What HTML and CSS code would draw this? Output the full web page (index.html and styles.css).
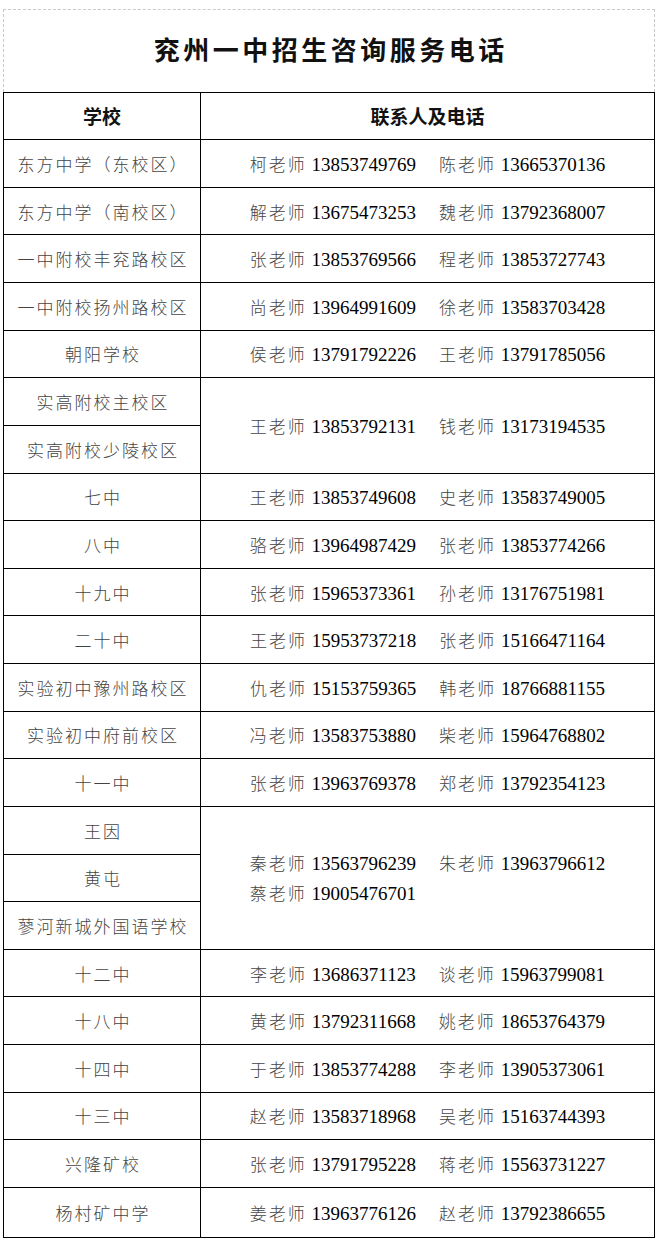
FILE: index.html
```html
<!DOCTYPE html>
<html lang="zh-CN">
<head>
<meta charset="utf-8">
<title>兖州一中招生咨询服务电话</title>
<link rel="stylesheet" href="styles.css">
</head>
<body>
<div class="page">
  <div class="title-box">
    <h1 class="title">兖州一中招生咨询服务电话</h1>
  </div>
  <table class="contacts">
    <colgroup><col class="col-school"><col class="col-contact"></colgroup>
    <thead>
      <tr><th class="h">学校</th><th class="h">联系人及电话</th></tr>
    </thead>
    <tbody>
      <tr><td class="s">东方中学（东校区）</td><td class="c"><span class="n">柯老师</span> <span class="p">13853749769</span><span class="gap"></span><span class="n">陈老师</span> <span class="p">13665370136</span></td></tr>
      <tr><td class="s">东方中学（南校区）</td><td class="c"><span class="n">解老师</span> <span class="p">13675473253</span><span class="gap"></span><span class="n">魏老师</span> <span class="p">13792368007</span></td></tr>
      <tr><td class="s">一中附校丰兖路校区</td><td class="c"><span class="n">张老师</span> <span class="p">13853769566</span><span class="gap"></span><span class="n">程老师</span> <span class="p">13853727743</span></td></tr>
      <tr><td class="s">一中附校扬州路校区</td><td class="c"><span class="n">尚老师</span> <span class="p">13964991609</span><span class="gap"></span><span class="n">徐老师</span> <span class="p">13583703428</span></td></tr>
      <tr><td class="s">朝阳学校</td><td class="c"><span class="n">侯老师</span> <span class="p">13791792226</span><span class="gap"></span><span class="n">王老师</span> <span class="p">13791785056</span></td></tr>
      <tr><td class="s">实高附校主校区</td><td class="c" rowspan="2"><span class="n">王老师</span> <span class="p">13853792131</span><span class="gap"></span><span class="n">钱老师</span> <span class="p">13173194535</span></td></tr>
      <tr><td class="s">实高附校少陵校区</td></tr>
      <tr><td class="s">七中</td><td class="c"><span class="n">王老师</span> <span class="p">13853749608</span><span class="gap"></span><span class="n">史老师</span> <span class="p">13583749005</span></td></tr>
      <tr><td class="s">八中</td><td class="c"><span class="n">骆老师</span> <span class="p">13964987429</span><span class="gap"></span><span class="n">张老师</span> <span class="p">13853774266</span></td></tr>
      <tr><td class="s">十九中</td><td class="c"><span class="n">张老师</span> <span class="p">15965373361</span><span class="gap"></span><span class="n">孙老师</span> <span class="p">13176751981</span></td></tr>
      <tr><td class="s">二十中</td><td class="c"><span class="n">王老师</span> <span class="p">15953737218</span><span class="gap"></span><span class="n">张老师</span> <span class="p">15166471164</span></td></tr>
      <tr><td class="s">实验初中豫州路校区</td><td class="c"><span class="n">仇老师</span> <span class="p">15153759365</span><span class="gap"></span><span class="n">韩老师</span> <span class="p">18766881155</span></td></tr>
      <tr><td class="s">实验初中府前校区</td><td class="c"><span class="n">冯老师</span> <span class="p">13583753880</span><span class="gap"></span><span class="n">柴老师</span> <span class="p">15964768802</span></td></tr>
      <tr><td class="s">十一中</td><td class="c"><span class="n">张老师</span> <span class="p">13963769378</span><span class="gap"></span><span class="n">郑老师</span> <span class="p">13792354123</span></td></tr>
      <tr><td class="s">王因</td><td class="c" rowspan="3"><div class="multi"><div class="line"><span class="n">秦老师</span> <span class="p">13563796239</span><span class="gap"></span><span class="n">朱老师</span> <span class="p">13963796612</span></div><div class="line"><span class="n">蔡老师</span> <span class="p">19005476701</span></div></div></td></tr>
      <tr><td class="s">黄屯</td></tr>
      <tr><td class="s">蓼河新城外国语学校</td></tr>
      <tr><td class="s">十二中</td><td class="c"><span class="n">李老师</span> <span class="p">13686371123</span><span class="gap"></span><span class="n">谈老师</span> <span class="p">15963799081</span></td></tr>
      <tr><td class="s">十八中</td><td class="c"><span class="n">黄老师</span> <span class="p">13792311668</span><span class="gap"></span><span class="n">姚老师</span> <span class="p">18653764379</span></td></tr>
      <tr><td class="s">十四中</td><td class="c"><span class="n">于老师</span> <span class="p">13853774288</span><span class="gap"></span><span class="n">李老师</span> <span class="p">13905373061</span></td></tr>
      <tr><td class="s">十三中</td><td class="c"><span class="n">赵老师</span> <span class="p">13583718968</span><span class="gap"></span><span class="n">吴老师</span> <span class="p">15163744393</span></td></tr>
      <tr><td class="s">兴隆矿校</td><td class="c"><span class="n">张老师</span> <span class="p">13791795228</span><span class="gap"></span><span class="n">蒋老师</span> <span class="p">15563731227</span></td></tr>
      <tr class="last"><td class="s">杨村矿中学</td><td class="c"><span class="n">姜老师</span> <span class="p">13963776126</span><span class="gap"></span><span class="n">赵老师</span> <span class="p">13792386655</span></td></tr>
    </tbody>
  </table>
</div>
</body>
</html>
```
FILE: styles.css
```css
html, body {
  margin: 0;
  padding: 0;
  background: #ffffff;
}

.page {
  padding: 9px 0 0 3px;
  width: 652px;
}

.title-box {
  box-sizing: border-box;
  width: 652px;
  height: 82.5px;
  border: 1px dashed #c9c9c9;
  border-bottom: none;
  display: flex;
  align-items: center;
  justify-content: center;
  padding-bottom: 4px;
}

.title {
  margin: 0;
  font-family: "Noto Sans CJK SC", sans-serif;
  font-weight: 700;
  font-size: 26px;
  letter-spacing: 3.5px;
  padding-left: 3.5px;
  color: #111;
  line-height: 1;
}

.contacts {
  border-collapse: collapse;
  width: 651px;
  table-layout: fixed;
}

.col-school { width: 197px; }
.col-contact { width: 454px; }

.contacts th,
.contacts td {
  border: 1px solid #000;
  padding: 0;
  text-align: center;
  vertical-align: middle;
}

.contacts tr {
  height: 47.64px;
}

.contacts tr.last {
  height: 50.5px;
}

.h {
  font-family: "Noto Sans CJK SC", sans-serif;
  font-weight: 700;
  font-size: 19px;
  color: #111;
}

.s {
  font-family: "Noto Sans CJK SC", sans-serif;
  font-weight: 300;
  font-size: 17px;
  letter-spacing: 2px;
  padding-left: 2px !important;
  color: #444;
  white-space: nowrap;
}

.c {
  font-family: "Liberation Serif", "Noto Sans CJK SC", serif;
  font-size: 19px;
  white-space: nowrap;
}

.n {
  font-family: "Noto Sans CJK SC", sans-serif;
  font-weight: 300;
  font-size: 17px;
  letter-spacing: 2px;
  color: #444;
}

.p {
  font-family: "Liberation Serif", serif;
  font-size: 19px;
  color: #000;
}

.gap {
  display: inline-block;
  width: 23px;
}

.multi {
  display: inline-block;
  text-align: left;
}

.line {
  line-height: 29px;
}
```
